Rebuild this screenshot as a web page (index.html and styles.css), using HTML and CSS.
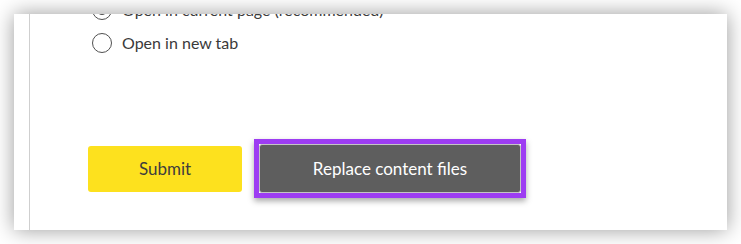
FILE: index.html
```html
<!DOCTYPE html>
<html lang="en">
<head>
<meta charset="utf-8">
<title>Replace content files</title>
<link rel="stylesheet" href="styles.css">
</head>
<body>
<div class="stage">
  <div class="panel">
    <div class="content">
      <div class="radios">
        <label class="radio-row">
          <span class="radio checked"></span>
          <span class="radio-label">Open in current page (recommended)</span>
        </label>
        <label class="radio-row">
          <span class="radio"></span>
          <span class="radio-label">Open in new tab</span>
        </label>
      </div>
      <div class="actions">
        <button class="btn btn-submit" type="button">Submit</button>
        <span class="focus-ring">
          <button class="btn btn-replace" type="button">Replace content files</button>
        </span>
      </div>
    </div>
  </div>
</div>
</body>
</html>
```

FILE: styles.css
```css
* { box-sizing: border-box; }
html, body {
  margin: 0;
  padding: 0;
  background: #ffffff;
}
body {
  font-family: Lato, "Liberation Sans", sans-serif;
  color: #333333;
}
.stage {
  width: 741px;
  height: 244px;
  padding: 14px;
  overflow: hidden;
}
.panel {
  width: 713px;
  height: 216px;
  background: #ffffff;
  box-shadow: 0 0 20px rgba(0, 0, 0, 0.4);
  overflow: hidden;
  padding-left: 15px;
}
.content {
  display: flow-root;
  height: 100%;
  border-left: 1px solid #cfcfcf;
  padding-left: 58px;
}
.radios {
  display: flex;
  flex-direction: column;
  margin-top: -21px;
}
.radio-row {
  display: flex;
  align-items: center;
  height: 33px;
  gap: 10px;
  padding-left: 4px;
}
.radio {
  width: 20px;
  height: 20px;
  border: 1.5px solid #505050;
  border-radius: 50%;
  display: flex;
  align-items: center;
  justify-content: center;
  flex: none;
}
.radio.checked::after {
  content: "";
  width: 10px;
  height: 10px;
  border-radius: 50%;
  background: #505050;
}
.radio-label {
  font-size: 16px;
  color: #3a3a3a;
}
.actions {
  display: flex;
  align-items: center;
  gap: 12px;
  margin-top: 80px;
}
.btn {
  font-family: Lato, "Liberation Sans", sans-serif;
  font-size: 17px;
  border-radius: 3px;
  cursor: pointer;
}
.btn-submit {
  width: 154px;
  height: 46px;
  background: #fde11e;
  border: none;
  color: #3d3d3d;
}
.focus-ring {
  display: block;
  border: 5px solid #9d3cf2;
  box-shadow: 0 3px 6px rgba(0, 0, 0, 0.35);
}
.btn-replace {
  display: block;
  width: 262px;
  height: 49px;
  background: #5e5e5e;
  border: 1px solid #c4c4c4;
  color: #ffffff;
}
```
